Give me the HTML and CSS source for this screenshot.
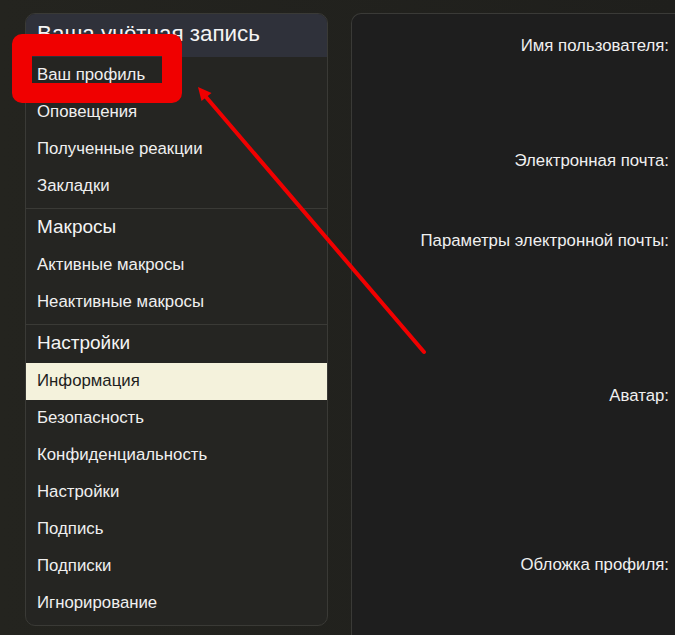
FILE: index.html
```html
<!DOCTYPE html>
<html lang="ru">
<head>
  <meta charset="UTF-8" />
  <title>Ваша учётная запись</title>
  <link rel="stylesheet" href="styles.css">
</head>
<body>
  <div class="page">
    <aside class="menu">
      <h2 class="menu-title">Ваша учётная запись</h2>
      <div class="menu-section">
        <a class="menu-item">Ваш профиль</a>
        <a class="menu-item">Оповещения</a>
        <a class="menu-item">Полученные реакции</a>
        <a class="menu-item">Закладки</a>
      </div>
      <div class="menu-section">
        <h3 class="menu-head">Макросы</h3>
        <a class="menu-item">Активные макросы</a>
        <a class="menu-item">Неактивные макросы</a>
      </div>
      <div class="menu-section">
        <h3 class="menu-head">Настройки</h3>
        <a class="menu-item active">Информация</a>
        <a class="menu-item">Безопасность</a>
        <a class="menu-item">Конфиденциальность</a>
        <a class="menu-item">Настройки</a>
        <a class="menu-item">Подпись</a>
        <a class="menu-item">Подписки</a>
        <a class="menu-item">Игнорирование</a>
      </div>
    </aside>

    <main class="panel">
      <div class="row row-user"><label>Имя пользователя:</label><div class="field"></div></div>
      <div class="row row-mail"><label>Электронная почта:</label><div class="field"></div></div>
      <div class="row row-opts"><label>Параметры электронной почты:</label><div class="field"></div></div>
      <div class="row row-avatar"><label>Аватар:</label><div class="field"></div></div>
      <div class="row row-cover"><label>Обложка профиля:</label><div class="field"></div></div>
    </main>
  </div>

  <!-- пометка поверх скриншота -->
  <div class="mark-box"></div>
  <svg class="mark-arrow" width="675" height="635" viewBox="0 0 675 635">
    <line x1="424" y1="352" x2="206" y2="97" stroke="#f00000" stroke-width="4" stroke-linecap="round" />
    <polygon points="198,87 211.5,93 201.5,101" fill="#f00000" />
  </svg>
</body>
</html>
```

FILE: styles.css
```css
html, body {
  margin: 0;
  height: 100%;
}

body {
  font-family: "Liberation Sans", Arial, sans-serif;
  background: linear-gradient(90deg, #24241f 0%, #1f1f1c 100%);
  color: #f2f2f2;
  overflow: hidden;
  position: relative;
}

.page {
  display: flex;
  gap: 23px;
  height: 100%;
  box-sizing: border-box;
  padding: 13px 0 0 25px;
  align-items: flex-start;
}

/* боковое меню */
.menu {
  width: 301px;
  flex: none;
  background: #252522;
  border: 1px solid #3a3a36;
  border-radius: 10px;
  overflow: hidden;
  padding-bottom: 1px;
}

.menu-title {
  margin: 0;
  height: 43px;
  line-height: 39px;
  padding: 0 11px;
  font-size: 22.4px;
  font-weight: normal;
  background: #2f313a;
  color: #f4f4f4;
}

.menu-section {
  display: flex;
  flex-direction: column;
  padding-bottom: 3px;
  border-bottom: 1px solid #3a3a36;
}

.menu-section:last-child {
  border-bottom: none;
  padding-bottom: 2px;
}

.menu-head {
  margin: 0;
  height: 38px;
  line-height: 35px;
  padding: 0 11px;
  font-size: 19px;
  font-weight: normal;
  color: #f4f4f4;
}

.menu-item {
  display: block;
  height: 37px;
  line-height: 36px;
  padding: 0 11px;
  font-size: 16.8px;
  color: #f0f0f0;
}

.menu-item.active {
  background: #f4f2dc;
  color: #1e1e1e;
}

/* правая панель */
.panel {
  flex: 1;
  align-self: stretch;
  background: #1e1e1e;
  border: 1px solid #3a3a37;
  border-right: none;
  border-bottom: none;
  border-radius: 10px 0 0 0;
  padding: 22px 0 0 10px;
}

.row {
  display: flex;
}

.row label {
  width: 307px;
  text-align: right;
  font-size: 16.8px;
  color: #f0f0f0;
}

.row-user { height: 115px; }
.row-mail { height: 80px; }
.row-opts { height: 155px; }
.row-avatar { height: 169px; }
.row-cover { height: 40px; }

/* красная рамка и стрелка */
.mark-box {
  position: absolute;
  left: 12px;
  top: 34px;
  width: 130px;
  height: 27px;
  border: 20px solid #f00000;
  border-top-width: 22px;
  border-radius: 10px;
}

.mark-arrow {
  position: absolute;
  left: 0;
  top: 0;
}
```
